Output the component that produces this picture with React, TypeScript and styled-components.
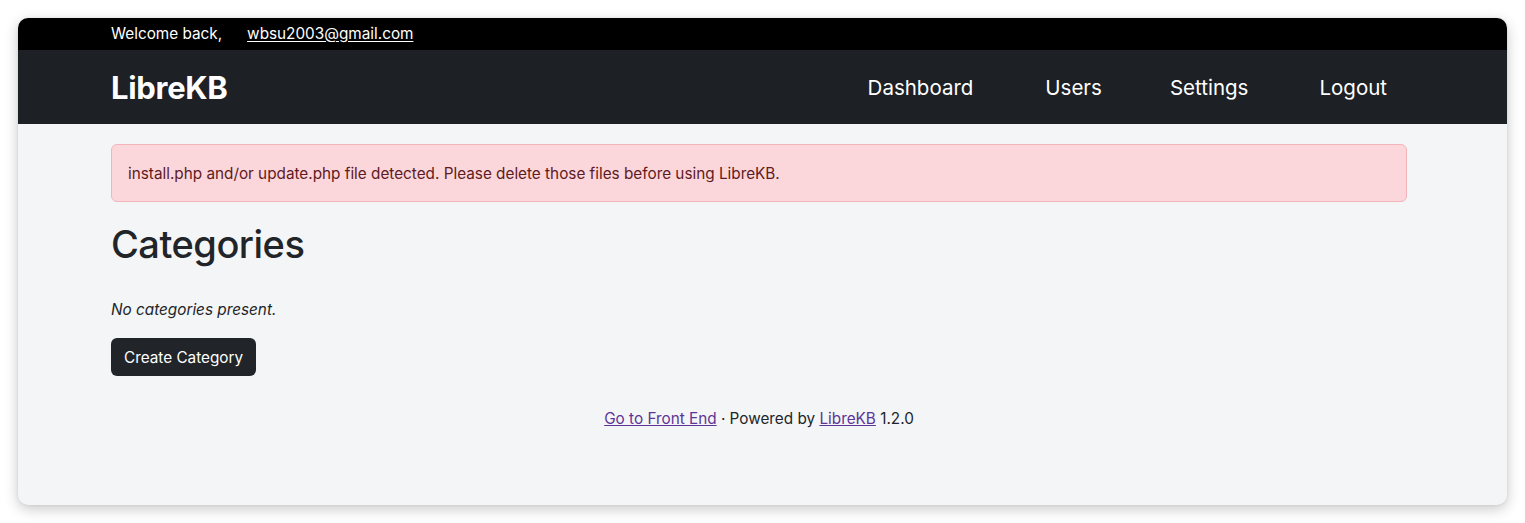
import React from "react";
import styled, { createGlobalStyle } from "styled-components";

const Global = createGlobalStyle`
  html, body { margin: 0; padding: 0; background: #ffffff; }
  body { font-family: Inter, "Noto Sans", "Liberation Sans", sans-serif; font-size: 15.3px; }
  * { box-sizing: border-box; }
`;

const Page = styled.div`
  padding: 18px;
  width: 1525px;
  height: 523px;
`;

const Window = styled.div`
  height: 487px;
  border-radius: 10px;
  overflow: hidden;
  background: #f4f5f7;
  box-shadow: 0 4px 14px rgba(0, 0, 0, 0.22), 0 0 3px rgba(0, 0, 0, 0.08);
  display: flex;
  flex-direction: column;
`;

const Container = styled.div`
  padding: 0 100px 0 93px;
`;

const TopBar = styled.div`
  background: #000;
  height: 32px;
  color: #fff;
  font-size: 15.3px;
  line-height: 32px;
`;

const TopRow = styled(Container)`
  display: flex;
  gap: 25px;
`;

const Email = styled.a`
  color: #fff;
  text-decoration: underline;
  text-underline-offset: 2px;
`;

const NavBar = styled.nav`
  background: #1d2024;
  height: 74px;
`;

const NavRow = styled(Container)`
  height: 100%;
  display: flex;
  align-items: center;
  justify-content: space-between;
`;

const Brand = styled.a`
  color: #fff;
  font-weight: 700;
  font-size: 31px;
  letter-spacing: -0.3px;
  text-decoration: none;
`;

const NavLinks = styled.div`
  display: flex;
  padding-right: 20px;
`;

const NavLink = styled.a<{ $gap: number }>`
  color: #fff;
  font-size: 20.5px;
  text-decoration: none;
  margin-left: ${(p) => p.$gap}px;
`;

const Main = styled(Container)`
  padding-top: 20px;
`;

const Alert = styled.div`
  background: #fbd7db;
  border: 1px solid #f5b3ba;
  color: #5f1a22;
  border-radius: 6px;
  padding: 17px 16px 15px;
  font-size: 15.3px;
  line-height: 24px;
`;

const Title = styled.h1`
  margin: 18px 0 0;
  font-size: 38px;
  font-weight: 500;
  color: #212529;
  line-height: 48px;
  letter-spacing: -0.5px;
`;

const Empty = styled.p`
  margin: 30px 0 0;
  font-style: italic;
  color: #212529;
  font-size: 15.3px;
  line-height: 24px;
`;

const Button = styled.button`
  margin-top: 16px;
  background: #212529;
  color: #fff;
  border: none;
  border-radius: 6px;
  height: 38px;
  padding: 0 13px;
  font-family: inherit;
  font-size: 15.3px;
  display: block;
`;

const Footer = styled.div`
  margin-top: 31px;
  text-align: center;
  color: #212529;
  font-size: 15.3px;
  line-height: 24px;
`;

const FootLink = styled.a`
  color: #5c3596;
  text-decoration: underline;
`;

const links = [
  { label: "Dashboard", gap: 0 },
  { label: "Users", gap: 72 },
  { label: "Settings", gap: 68 },
  { label: "Logout", gap: 71 },
];

export default function App() {
  return (
    <>
      <Global />
      <Page>
        <Window>
          <TopBar>
            <TopRow>
              <span>Welcome back,</span>
              <Email href="#">wbsu2003@gmail.com</Email>
            </TopRow>
          </TopBar>
          <NavBar>
            <NavRow>
              <Brand href="#">LibreKB</Brand>
              <NavLinks>
                {links.map((l) => (
                  <NavLink key={l.label} $gap={l.gap} href="#">
                    {l.label}
                  </NavLink>
                ))}
              </NavLinks>
            </NavRow>
          </NavBar>
          <Main>
            <Alert>
              install.php and/or update.php file detected. Please delete those files before using LibreKB.
            </Alert>
            <Title>Categories</Title>
            <Empty>No categories present.</Empty>
            <Button>Create Category</Button>
            <Footer>
              <FootLink href="#">Go to Front End</FootLink> · Powered by{" "}
              <FootLink href="#">LibreKB</FootLink> 1.2.0
            </Footer>
          </Main>
        </Window>
      </Page>
    </>
  );
}
